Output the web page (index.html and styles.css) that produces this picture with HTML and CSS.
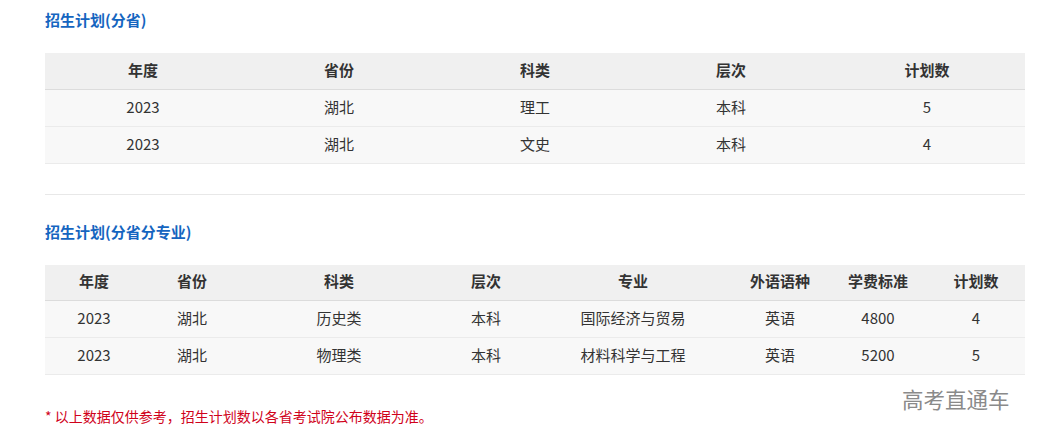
FILE: index.html
```html
<!DOCTYPE html>
<html lang="zh">
<head>
<meta charset="utf-8">
<link rel="stylesheet" href="styles.css">
</head>
<body>
<div class="page">
  <h3 class="title">招生计划(分省)</h3>
  <table class="plan plan-5">
    <thead>
      <tr><th>年度</th><th>省份</th><th>科类</th><th>层次</th><th>计划数</th></tr>
    </thead>
    <tbody>
      <tr><td>2023</td><td>湖北</td><td>理工</td><td>本科</td><td>5</td></tr>
      <tr><td>2023</td><td>湖北</td><td>文史</td><td>本科</td><td>4</td></tr>
    </tbody>
  </table>
  <div class="divider"></div>
  <h3 class="title title-2">招生计划(分省分专业)</h3>
  <table class="plan plan-8">
    <colgroup>
      <col class="w10"><col class="w10"><col class="w20"><col class="w10"><col class="w20"><col class="w10"><col class="w10"><col class="w10">
    </colgroup>
    <thead>
      <tr><th>年度</th><th>省份</th><th>科类</th><th>层次</th><th>专业</th><th>外语语种</th><th>学费标准</th><th>计划数</th></tr>
    </thead>
    <tbody>
      <tr><td>2023</td><td>湖北</td><td>历史类</td><td>本科</td><td>国际经济与贸易</td><td>英语</td><td>4800</td><td>4</td></tr>
      <tr><td>2023</td><td>湖北</td><td>物理类</td><td>本科</td><td>材料科学与工程</td><td>英语</td><td>5200</td><td>5</td></tr>
    </tbody>
  </table>
  <p class="note">* 以上数据仅供参考，招生计划数以各省考试院公布数据为准。</p>
  <div class="watermark">高考直通车</div>
</div>
</body>
</html>
```

FILE: styles.css
```css
html, body {
  margin: 0;
  padding: 0;
  background: #fff;
}

body {
  font-family: "Noto Sans CJK SC", "Noto Sans", sans-serif;
  color: #333;
}

.page {
  position: relative;
  width: 980px;
  padding: 10px 0 0 45px;
  height: 429px;
}

.title {
  margin: 0;
  font-size: 15px;
  line-height: 20px;
  font-weight: bold;
  color: #1565c0;
}

.title-2 {
  margin-top: 27px;
}

.plan {
  width: 980px;
  margin-top: 23px;
  border-collapse: collapse;
  table-layout: fixed;
  font-size: 15px;
}

.plan th,
.plan td {
  box-sizing: border-box;
  padding: 0 0 2px;
  text-align: center;
  vertical-align: middle;
  line-height: 20px;
}

.plan th {
  height: 36px;
  background: #f0f0f0;
  font-weight: bold;
  color: #333;
  border-bottom: 1px solid #dcdcdc;
}

.plan td {
  height: 37px;
  background: #f8f8f8;
  border-bottom: 1px solid #ebebeb;
  color: #333;
}

.w10 { width: 10%; }
.w20 { width: 20%; }

.divider {
  margin-top: 30px;
  height: 1px;
  background: #e8e8e8;
}

.note {
  margin: 31px 0 0;
  font-size: 14px;
  line-height: 20px;
  color: #d0021b;
}

.watermark {
  position: absolute;
  left: 902px;
  top: 386px;
  font-size: 21.5px;
  line-height: 26px;
  color: #8a8a8a;
  white-space: nowrap;
}
```
